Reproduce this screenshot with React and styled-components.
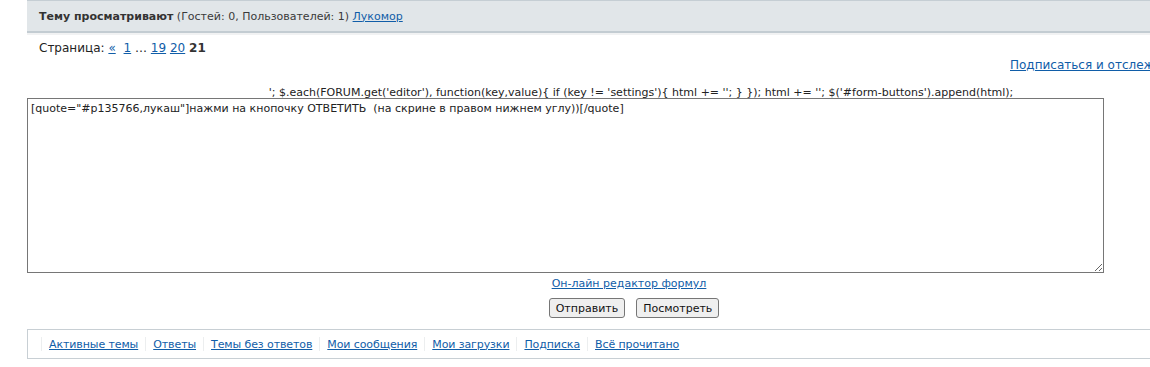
import React from "react";
import styled, { createGlobalStyle } from "styled-components";

const Global = createGlobalStyle`
  html, body {
    margin: 0;
    padding: 0;
    background: #fff;
    overflow: hidden;
  }
  body {
    font-family: "DejaVu Sans", Verdana, sans-serif;
    font-size: 11px;
    color: #333;
  }
`;

const Page = styled.div`
  margin-left: 27px;
  width: 1204px;
`;

const Header = styled.div`
  height: 30px;
  display: flex;
  align-items: center;
  padding-left: 12px;
  background: #e1e6e9;
  border-top: 1px solid #c5ced4;
  border-bottom: 2px solid #c3ccd2;
  box-shadow: 0 2px 0 #f1f2f3;
  font-size: 11px;
  color: #3a3a3a;
`;

const Bold = styled.b`
  font-weight: bold;
  color: #333;
`;

const Link = styled.a`
  color: #105da8;
  text-decoration: underline;
  margin: ${(p) => p.$m || "0"};
`;

const Pager = styled.div`
  padding: 8px 0 0 12px;
  font-size: 12px;
  color: #222;
  height: 14px;
`;

const SubRow = styled.div`
  display: flex;
  justify-content: flex-end;
  padding: 3px 6px 0 0;
  font-size: 12px;
`;

const Script = styled.div`
  text-align: center;
  font-size: 11px;
  color: #222;
  margin-top: 15px;
  padding-left: 24px;
  height: 11px;
  line-height: 11px;
`;

const Area = styled.textarea`
  display: block;
  box-sizing: border-box;
  width: 1077px;
  height: 175px;
  margin: 0;
  padding: 3px 3px;
  border: 1px solid #767676;
  font-family: "DejaVu Sans", Verdana, sans-serif;
  font-size: 11px;
  color: #222;
  resize: both;
  outline: none;
`;

const Center = styled.div`
  display: flex;
  justify-content: center;
  gap: ${(p) => p.$gap || 0}px;
  margin-top: ${(p) => p.$mt || 0}px;
  padding-left: ${(p) => p.$pl || 0}px;
  font-size: 11px;
`;

const Button = styled.button`
  font-family: "DejaVu Sans", Verdana, sans-serif;
  font-size: 11px;
  color: #111;
  height: 20px;
  padding: 0 6px;
  background: #efefef;
  border: 1px solid #767676;
  border-radius: 3px;
`;

const Footer = styled.div`
  margin-top: 11px;
  height: 28px;
  display: flex;
  align-items: center;
  padding-left: 6px;
  border: 1px solid #c8cfd4;
  border-right: none;
  box-shadow: 0 1px 0 #eceeef;
`;

const NavItem = styled.span`
  display: flex;
  align-items: center;
  font-size: 11px;
  letter-spacing: -0.1px;
  &::before {
    content: "";
    width: 1px;
    height: 14px;
    background: #eceeef;
    margin: 0 7px;
  }
`;

const nav = [
  "Активные темы",
  "Ответы",
  "Темы без ответов",
  "Мои сообщения",
  "Мои загрузки",
  "Подписка",
  "Всё прочитано",
];

export default function App() {
  return (
    <Page>
      <Global />
      <Header>
        <Bold>Тему просматривают</Bold>&nbsp;(Гостей: 0, Пользователей: 1)&nbsp;
        <Link href="#">Лукомор</Link>
      </Header>
      <Pager>
        Страница: <Link href="#" $m="0 4px 0 0">«</Link> <Link href="#">1</Link> … <Link href="#">19</Link>{" "}
        <Link href="#">20</Link> <Bold>21</Bold>
      </Pager>
      <SubRow>
        <Link href="#">Подписаться и отслеживать тему</Link>
      </SubRow>
      <Script>
        '; $.each(FORUM.get('editor'), function(key,value){"{"} if (key != 'settings'){"{"} html += ''; {"}"} {"}"}); html += ''; $('#form-buttons').append(html);
      </Script>
      <Area
        spellCheck={false}
        defaultValue={'[quote="#p135766,лукаш"]нажми на кнопочку ОТВЕТИТЬ  (на скрине в правом нижнем углу))[/quote]'}
      />
      <Center $mt={4}>
        <Link href="#">Он-лайн редактор формул</Link>
      </Center>
      <Center $mt={8} $gap={11} $pl={10}>
        <Button>Отправить</Button>
        <Button>Посмотреть</Button>
      </Center>
      <Footer>
        {nav.map((n) => (
          <NavItem key={n}>
            <Link href="#">{n}</Link>
          </NavItem>
        ))}
      </Footer>
    </Page>
  );
}
